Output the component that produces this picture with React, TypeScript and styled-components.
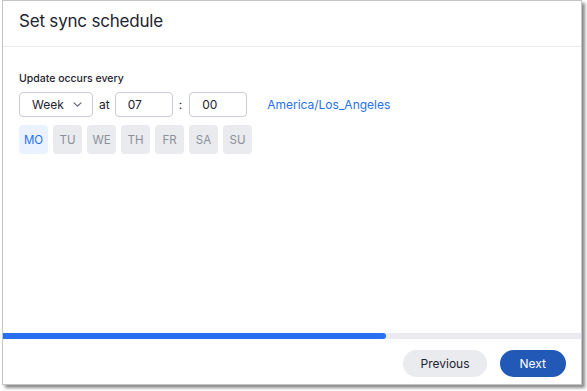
import React from "react";
import styled, { createGlobalStyle } from "styled-components";

const Global = createGlobalStyle`
  html, body { margin: 0; padding: 0; background: #ffffff; }
  body { font-family: Inter, "Noto Sans", Arial, sans-serif; }
  * { box-sizing: border-box; }
`;

const Page = styled.div`
  padding: 0 0 0 2px;
  width: 587px;
  height: 391px;
`;

const Window = styled.div`
  width: 580px;
  height: 385px;
  border: 1px solid #c4c4c4;
  background: #fff;
  box-shadow: 3px 3px 3px rgba(0, 0, 0, 0.45);
  display: flex;
  flex-direction: column;
`;

const Header = styled.div`
  height: 46px;
  border-bottom: 1px solid #ececec;
  display: flex;
  align-items: center;
  padding: 0 0 6px 16px;
`;

const Title = styled.h1`
  margin: 0;
  font-size: 17px;
  font-weight: 400;
  color: #1d232f;
  letter-spacing: -0.2px;
`;

const Body = styled.div`
  flex: 1;
  padding: 25px 16px 0;
  display: flex;
  flex-direction: column;
`;

const Label = styled.div`
  font-size: 10.5px;
  font-weight: 500;
  color: #1d232f;
  margin-bottom: 7px;
`;

const Row = styled.div`
  display: flex;
  align-items: center;
  height: 25px;
`;

const Box = styled.div<{ $w: number }>`
  width: ${(p) => p.$w}px;
  height: 25px;
  border: 1px solid #c9ccd2;
  border-radius: 4px;
  display: flex;
  align-items: center;
  font-size: 12px;
  color: #1d232f;
  padding-left: 12px;
`;

const SelectBox = styled(Box)`
  gap: 9px;
`;

const Sep = styled.span<{ $ml: number; $mr: number }>`
  font-size: 12px;
  color: #1d232f;
  margin: 0 ${(p) => p.$mr}px 0 ${(p) => p.$ml}px;
`;

const Link = styled.a`
  font-size: 12px;
  color: #2770ef;
  margin-left: 20px;
  text-decoration: none;
`;

const Days = styled.div`
  display: flex;
  gap: 5px;
  margin-top: 8px;
`;

const Day = styled.div<{ $active?: boolean }>`
  width: 29px;
  height: 29px;
  border-radius: 4px;
  display: flex;
  align-items: center;
  justify-content: center;
  font-size: 11.5px;
  background: ${(p) => (p.$active ? "#eaf2ff" : "#eaebef")};
  color: ${(p) => (p.$active ? "#2770ef" : "#8a8f99")};
`;

const Spacer = styled.div`
  flex: 1;
`;

const Progress = styled.div`
  height: 6px;
  background: #eaebef;
  margin-bottom: 11px;
`;

const Fill = styled.div`
  height: 100%;
  background: #2770ef;
  border-radius: 0 3px 3px 0;
`;

const Footer = styled.div`
  display: flex;
  justify-content: flex-end;
  gap: 13px;
  padding: 0 15px 0 0;
  height: 27px;
  margin-bottom: 7px;
`;

const Button = styled.button<{ $primary?: boolean }>`
  height: 27px;
  border: none;
  border-radius: 14px;
  font-family: inherit;
  font-size: 12px;
  padding: 0 ${(p) => (p.$primary ? 20 : 17)}px;
  background: ${(p) => (p.$primary ? "#2259b7" : "#eaebef")};
  color: ${(p) => (p.$primary ? "#ffffff" : "#1d232f")};
`;

const Chevron = () => (
  <svg width="9" height="5" viewBox="0 0 9 5" fill="none">
    <path d="M1 0.8l3.5 3.4 3.5-3.4" stroke="#5a606c" strokeWidth="1.1" strokeLinecap="round" strokeLinejoin="round" />
  </svg>
);

const days = ["MO", "TU", "WE", "TH", "FR", "SA", "SU"];

export default function App() {
  const progress = 383 / 578;
  return (
    <>
      <Global />
      <Page>
        <Window>
          <Header>
            <Title>Set sync schedule</Title>
          </Header>
          <Body>
            <Label>Update occurs every</Label>
            <Row>
              <SelectBox $w={74}>
                Week <Chevron />
              </SelectBox>
              <Sep $ml={6} $mr={5}>at</Sep>
              <Box $w={58}>07</Box>
              <Sep $ml={6} $mr={7}>:</Sep>
              <Box $w={58}>00</Box>
              <Link>America/Los_Angeles</Link>
            </Row>
            <Days>
              {days.map((d, i) => (
                <Day key={d} $active={i === 0}>
                  {d}
                </Day>
              ))}
            </Days>
          </Body>
          <Spacer />
          <Progress>
            <Fill style={{ width: `${progress * 100}%` }} />
          </Progress>
          <Footer>
            <Button>Previous</Button>
            <Button $primary>Next</Button>
          </Footer>
        </Window>
      </Page>
    </>
  );
}
